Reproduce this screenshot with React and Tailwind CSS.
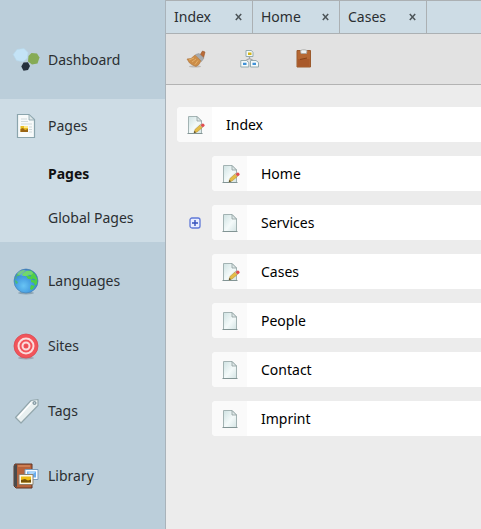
import React from "react";

function DashboardIcon() {
  return (
    <svg width="28" height="26" viewBox="0 0 28 26" aria-hidden="true">
      <path d="M5 2.500 12 1.500 16 5.500 15.500 11 11 14.800 4.500 13.500 1.200 7.500Z" fill="#c4e3f6" stroke="#b6d8ed" strokeWidth=".6" />
      <path d="M19.500 6 25 6.500 27.500 10.500 25.500 16.500 20 17.500 16 14.500 16.500 9Z" fill="#86ab55" />
      <path d="M11.500 15.500 16 15.200 18 19 16 23 11.500 23.700 9.300 19.500Z" fill="#26313d" />
    </svg>
  );
}

function ArticleIcon() {
  return (
    <svg width="28" height="28" viewBox="0 0 28 28" aria-hidden="true">
      <path d="M5.500 2.500H17L22.500 7.500V25.500H5.500Z" fill="#f7fafa" stroke="#8ba5ad" strokeWidth="1.200" />
      <path d="M17 2.500V8H22.500Z" fill="#dce6e8" stroke="#8ba5ad" strokeWidth=".8" />
      <path d="M9 7h6M9 9.500h7M9 12h11M17 15h3M17 17.500h3M17 20h3" stroke="#d0d9db" />
      <path d="M8.500 14h7.500v6H8.500Z" fill="#e8bd20" />
      <path d="M8.500 20v-3l2.500-1 2 2 3-1v3Z" fill="#9a6413" />
      <path d="M12 14h4v2h-4Z" fill="#ffe88a" />
    </svg>
  );
}

function GlobeIcon() {
  return (
    <svg width="28" height="28" viewBox="0 0 28 28" aria-hidden="true">
      <defs>
        <radialGradient id="sea" cx=".4" cy=".7" r=".75">
          <stop offset="0" stopColor="#68c4f4" />
          <stop offset=".6" stopColor="#3c91da" />
          <stop offset="1" stopColor="#2b6fb8" />
        </radialGradient>
      </defs>
      <ellipse cx="14" cy="26" rx="8" ry="1.500" fill="#8da5b3" />
      <circle cx="14" cy="14" r="12" fill="url(#sea)" stroke="#4a84b4" strokeWidth=".7" />
      <path d="M5 7C8 3 11 3 13 3L12 5 9 7 7 9 5 9 4 12 3 12Z" fill="#54b96c" />
      <path d="M2.500 13 5 14 6 16 4 17Z" fill="#4bbc76" />
      <path d="M14 4 19 3.500 23 7 25.500 12 25 17 23 19 22 16 19 15 19 12 16 12 14 9 11 9 10 7Z" fill="#4ece48" />
      <path d="M19 18 23 19 20 23 18 22Z" fill="#4ece48" />
      <path d="M16 8l3 1M20 12l3 1" stroke="#328bcb" strokeWidth="1.300" />
      <ellipse cx="13" cy="6" rx="8" ry="3" fill="#fff" opacity=".2" />
    </svg>
  );
}

function TargetIcon() {
  return (
    <svg width="28" height="28" viewBox="0 0 28 28" aria-hidden="true">
      <ellipse cx="14" cy="26" rx="8" ry="1.500" fill="#a0a3af" />
      <circle cx="14" cy="14" r="12" fill="#f2545a" stroke="#d84a53" strokeWidth=".8" />
      <circle cx="14" cy="14" r="7.500" fill="none" stroke="#fbdcdc" strokeWidth="2" />
      <circle cx="14" cy="14" r="3.500" fill="#f2545a" stroke="#fbdcdc" strokeWidth="2" />
      <circle cx="14" cy="14" r="1.500" fill="#e94d55" />
    </svg>
  );
}

function TagIcon() {
  return (
    <svg width="28" height="28" viewBox="0 0 28 28" aria-hidden="true">
      <path d="M3.500 20.500 19 3.500 26 2.500V8.500L9 26Z" fill="#e9f0f0" stroke="#93a7ad" strokeWidth="1.200" strokeLinejoin="round" />
      <path d="M6 20.500 19.500 5.500" stroke="#fff" strokeWidth="1.500" />
      <circle cx="22.500" cy="6" r="1.500" fill="#bacbd4" stroke="#788d95" />
    </svg>
  );
}

function LibraryIcon() {
  return (
    <svg width="28" height="28" viewBox="0 0 28 28" aria-hidden="true">
      <path d="M3 2H20V26H4L2 24V4Z" fill="#b6623b" stroke="#603525" />
      <path d="M2 4 5 2V25L2 24Z" fill="#494b4c" />
      <path d="M6 4H18" stroke="#d5895c" strokeWidth="1.500" />
      <path d="M13 7.500H26V17.500H13Z" fill="#f7fbff" stroke="#7a9dbd" />
      <path d="M15 9.500H24V15.500H15Z" fill="#66acef" />
      <path d="M15 11 19 9.500H24L20 13Z" fill="#a9d5fa" />
      <path d="M7 12.500H21V22.500H7Z" fill="#fff9e7" stroke="#8e8270" />
      <path d="M9 14.500H19V20.500H9Z" fill="#eebd13" />
      <path d="M9 20.500V18l4-1 3 1.500 3-1v3Z" fill="#76520a" />
    </svg>
  );
}

function BrushIcon() {
  return (
    <svg width="20" height="20" viewBox="0 0 20 20" aria-hidden="true">
      <ellipse cx="9" cy="17.500" rx="6" ry="1" fill="#bdb9b5" />
      <path d="M14 6 16.500 2 19 3 17.500 9Z" fill="#b96a37" stroke="#95552d" strokeWidth=".6" />
      <path d="M9.500 5.500 13 4.500 18 9 15.500 12.500Z" fill="#a8abae" stroke="#8b8d8f" strokeWidth=".5" />
      <path d="M9 6 15 12 13 15.500 10 17.500 6.500 16 3.500 14 1 10 5 9.500Z" fill="#cc8d48" stroke="#a97440" strokeWidth=".6" />
      <path d="M3 11 8 9M6 13l4-3M9 15.500l3-4" stroke="#e9b974" strokeWidth=".8" />
    </svg>
  );
}

function SitemapIcon() {
  return (
    <svg width="20" height="20" viewBox="0 0 20 20" aria-hidden="true">
      <path d="M9.500 7V10M5 12 9.500 9.500 14 12" fill="none" stroke="#a5a5a5" strokeWidth="1.200" />
      <g fill="#f4fafa" stroke="#94aaae">
        <path d="M6 1.500h5.500L13 3.500v4H6Z" />
        <path d="M.8 11.500H6.500L8.800 13.500v4.500H.8Z" />
        <path d="M10.500 11.500h5.500L18.500 13.500v4.500h-8Z" />
      </g>
      <path d="M8 3.500h3.500v2.500H8Z" fill="#d4b518" />
      <path d="M3 13.800h3.500v2.200H3ZM12.500 13.800h3.500v2.200h-3.500Z" fill="#3e91d7" />
    </svg>
  );
}

function ClipboardIcon() {
  return (
    <svg width="20" height="20" viewBox="0 0 20 20" aria-hidden="true">
      <path d="M3 1.500H16.500V18H3Z" fill="#b56732" stroke="#9b5a2d" />
      <path d="M4 10H15.500V17.500H4Z" fill="#a9592a" />
      <path d="M6 10.500 13 9" stroke="#874116" />
      <path d="M6.500 1.500 8.500 .8H11L13 1.500 12.500 4.500H7Z" fill="#eef0f0" stroke="#a6a7a4" strokeWidth=".8" />
    </svg>
  );
}

function PageIcon({ edited }) {
  return (
    <svg width="20" height="20" viewBox="0 0 20 20" aria-hidden="true">
      <defs>
        <linearGradient id="sheet" x2="1" y2="1">
          <stop offset="0" stopColor="#cfe2e2" />
          <stop offset=".55" stopColor="#f4fafa" />
          <stop offset="1" stopColor="#d3e3e3" />
        </linearGradient>
      </defs>
      <path d="M3.500 1.500H12L16.500 6V18.500H3.500Z" fill="url(#sheet)" stroke="#a3b3b3" />
      <path d="M12 1.500V6H16.500Z" fill="#dfe9e9" stroke="#8fa0a0" strokeWidth=".8" />
      <path d="M2.500 18.500H17.500" stroke="#829494" />
      {edited && (
        <g>
          <path d="M9 18 10 14.500 15.500 9.500 18 12 12 17Z" fill="#e5bc45" stroke="#b3923c" strokeWidth=".6" />
          <path d="M14.800 10.200 16.300 8.800 19 11.500 17.500 12.800Z" fill="#b8bec1" />
          <circle cx="17.800" cy="10.300" r="1.700" fill="#e14d4f" />
          <path d="M9 18l.5-2 1.500 1.300Z" fill="#3c3527" />
        </g>
      )}
    </svg>
  );
}

function NavItem({ icon, label }) {
  return (
    <a href="#" className="flex h-[65px] items-center">
      <span className="flex w-12 justify-center pl-1">{icon}</span>
      {label}
    </a>
  );
}

const tabs = ["Index", "Home", "Cases"];
const tools = [
  ["Clean up", BrushIcon],
  ["Site structure", SitemapIcon],
  ["Paste", ClipboardIcon],
];
const children = [
  { name: "Home", edited: true },
  { name: "Services", expandable: true },
  { name: "Cases", edited: true },
  { name: "People" },
  { name: "Contact" },
  { name: "Imprint" },
];

function PageRow({ name, edited }) {
  return (
    <a href="#" className="flex h-[35px] flex-1 overflow-hidden rounded-l bg-white">
      <span className="flex w-[35px] items-center justify-center bg-[#fafafa]">
        <PageIcon edited={edited} />
      </span>
      <span className="flex items-center pl-[14px] text-black">{name}</span>
    </a>
  );
}

export default function App() {
  return (
    <div className="flex min-h-screen bg-[#ececec] font-['Noto_Sans','Open_Sans',sans-serif] text-sm text-[#2b2f32]">
      <nav className="w-[165px] shrink-0 bg-[#bbceda]">
        <div className="pt-[27px] pb-[7px]">
          <NavItem icon={<DashboardIcon />} label="Dashboard" />
        </div>
        <div className="bg-[#cddce5] pb-[2px]">
          <a href="#" className="flex h-[53px] items-center">
            <span className="flex w-12 justify-center pl-1">
              <ArticleIcon />
            </span>
            Pages
          </a>
          <a href="#" className="flex h-11 items-center pl-12 font-bold text-[#111]">
            Pages
          </a>
          <a href="#" className="flex h-11 items-center pl-12">
            Global Pages
          </a>
        </div>
        <div className="pt-[6px]">
          <NavItem icon={<GlobeIcon />} label="Languages" />
          <NavItem icon={<TargetIcon />} label="Sites" />
          <NavItem icon={<TagIcon />} label="Tags" />
          <NavItem icon={<LibraryIcon />} label="Library" />
        </div>
      </nav>

      <main className="min-w-0 flex-1 border-l border-[#a9b3ba]">
        <div className="flex h-[34px] border-y border-[#abb0b3] bg-[#cddce5]">
          {tabs.map((tab) => (
            <div key={tab} className="flex w-[87px] items-center justify-between border-r border-[#abb0b3] pr-[6px] pl-2">
              <button type="button">{tab}</button>
              <button type="button" aria-label={`Close ${tab}`} className="flex h-4 w-4 items-center justify-center">
                <svg width="7" height="8" viewBox="0 0 7 8" aria-hidden="true">
                  <path d="M.8 1 6.200 7M6.200 1 .8 7" stroke="#4c5458" strokeWidth="1.500" />
                </svg>
              </button>
            </div>
          ))}
        </div>

        <div className="flex h-[51px] items-center gap-[34px] border-b border-[#b3b3b3] bg-[#e2e2e2] pl-5">
          {tools.map(([name, Icon]) => (
            <button key={name} type="button" aria-label={name}>
              <Icon />
            </button>
          ))}
        </div>

        <ul className="flex flex-col gap-[14px] pt-[22px] pl-[11px]">
          <li className="flex">
            <PageRow name="Index" edited />
          </li>
          {children.map((page) => (
            <li key={page.name} className="flex">
              <span className="flex w-[35px] items-center justify-center">
                {page.expandable && (
                  <button type="button" aria-label={`Expand ${page.name}`}>
                    <svg width="12" height="12" viewBox="0 0 12 12" aria-hidden="true">
                      <rect x="1" y="1" width="10" height="10" rx="2" fill="#e8edff" stroke="#6079d8" strokeWidth="1.300" />
                      <path d="M6 3V9M3 6H9" stroke="#3350bd" strokeWidth="1.400" />
                    </svg>
                  </button>
                )}
              </span>
              <PageRow {...page} />
            </li>
          ))}
        </ul>
      </main>
    </div>
  );
}
